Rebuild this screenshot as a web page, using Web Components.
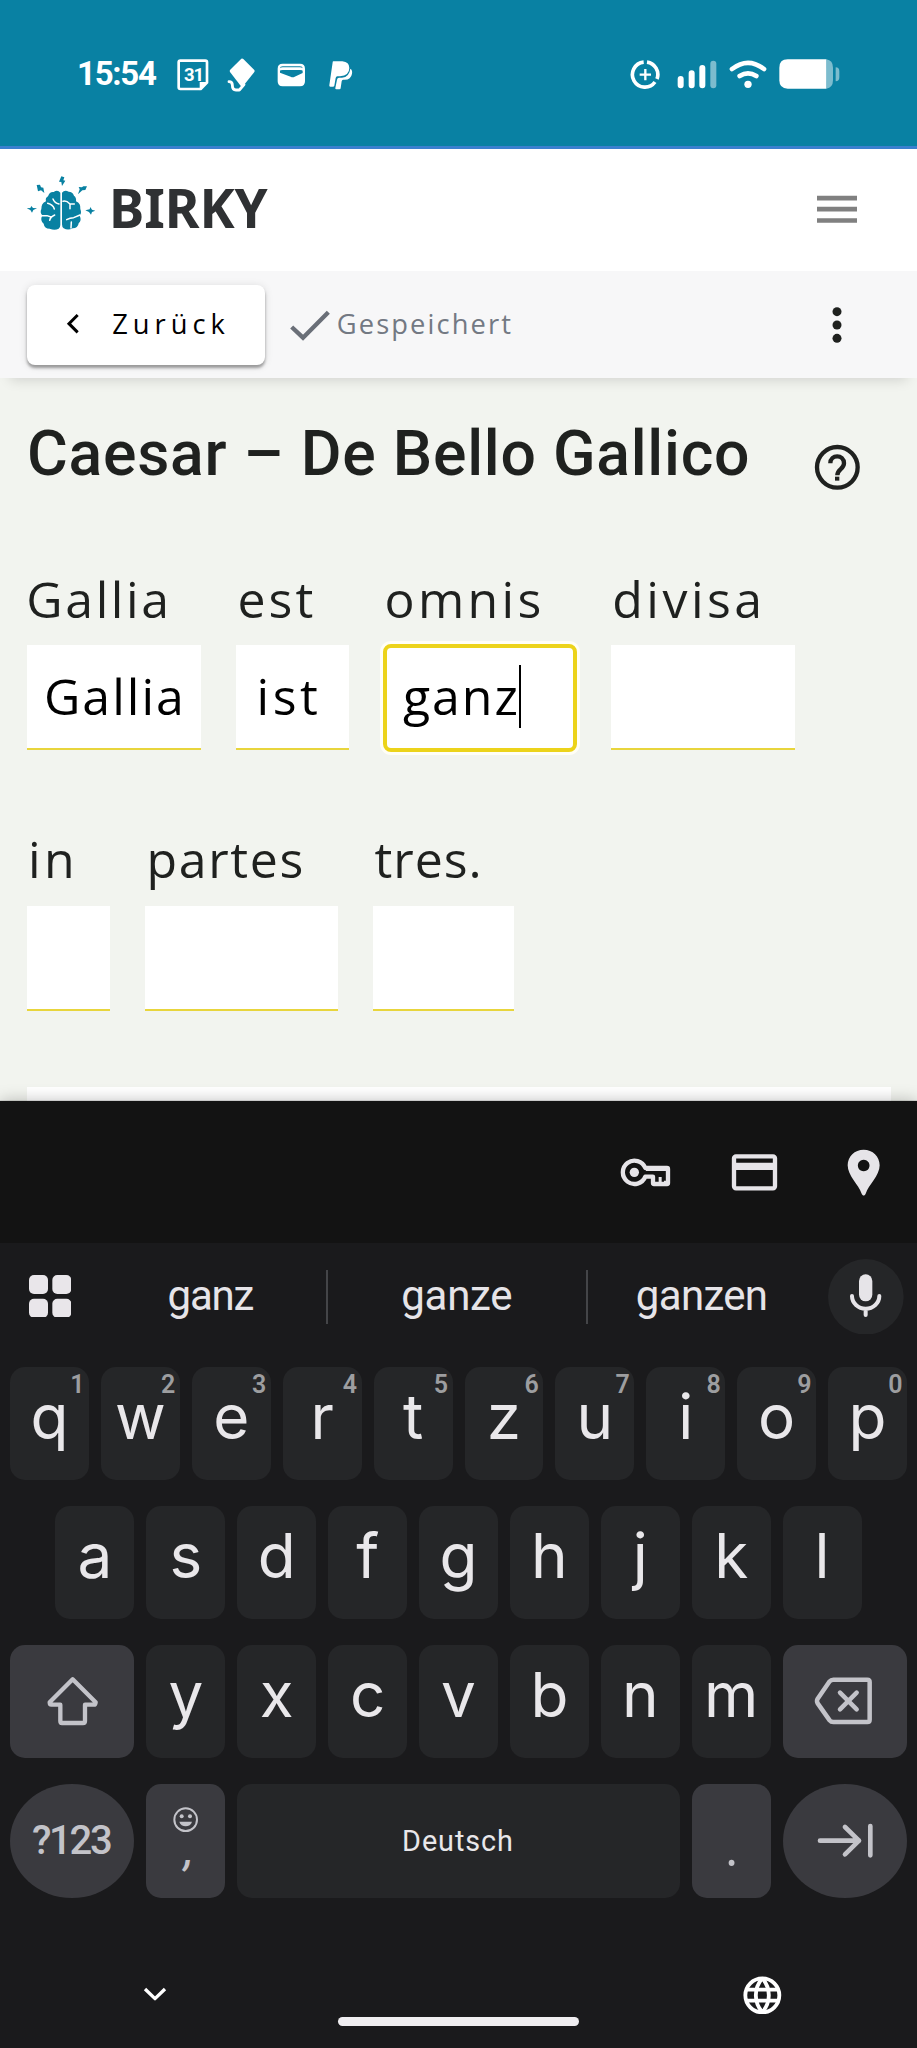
<!DOCTYPE html>
<html lang="de">
<head>
<meta charset="utf-8">
<title>Caesar – De Bello Gallico</title>
<style>
html,body{margin:0;padding:0}
body{width:917px;height:2048px;overflow:hidden;background:#f2f4ef}
</style>
</head>
<body>
<birky-app></birky-app>
<script>
/* Base: each element supplies its css and html as static strings */
class Base extends HTMLElement {
  connectedCallback() {
    if (this.shadowRoot) return;
    const t = document.createElement('template');
    t.innerHTML = `<style>${this.constructor.css}</style>${this.view ? this.view() : this.constructor.html}`;
    this.attachShadow({mode: 'open'}).appendChild(t.content.cloneNode(true));
    if (this.ready) this.ready();
  }
}

/* Text set to a given ink width (w) with its baseline (b) below the top of its box */
customElements.define('fit-text', class extends Base {
  static css = `:host{display:block;flex:none;white-space:nowrap} span{display:block}`;
  static html = `<span><slot></slot></span>`;
  ready() {
    const cs = getComputedStyle(this), c = document.createElement('canvas').getContext('2d');
    const s = this.textContent.trim(), el = this.shadowRoot.querySelector('span');
    c.font = `${cs.fontStyle} ${cs.fontWeight} ${cs.fontSize} ${cs.fontFamily}`;
    const m = c.measureText(s), w = +this.getAttribute('w'), b = +this.getAttribute('b');
    if (w) {
      const ink = m.actualBoundingBoxLeft + m.actualBoundingBoxRight;
      if (s.length > 1) el.style.letterSpacing = (w - ink) / (s.length - 1) + 'px';
      el.style.marginLeft = m.actualBoundingBoxLeft + 'px';
      this.style.width = w + 'px';
    }
    if (b) el.style.lineHeight = 2 * b - m.fontBoundingBoxAscent + m.fontBoundingBoxDescent + 'px';
    this.style.height = (b || 10) + 'px';
  }
});

/* Icon artwork, drawn on a grid of three units to the pixel: [viewBox, markup] */
const W = 'fill="none" stroke="currentColor" stroke-linecap="round" stroke-linejoin="round"';
const ICONS = {
  calendar: ['528 170 126 108', `<path ${W} stroke-width="8" d="M536 186q0-5 5-5h75q5 0 5 5v61l-19 19h-61q-5 0-5-5z"/><path fill="currentColor" d="M599 270v-25h25z"/>`],
  kite: ['654 170 144 108', `<path fill="currentColor" d="M724 175q3-2 6 1l33 33q2 3 0 6l-34 43q-3 3-6 0l-33-43q-2-3 0-6z"/><path ${W} stroke-width="8.5" d="M687 244q10 0 10 10 0 15 11 15h10l14-16"/>`],
  wallet: ['798 170 152 108', `<path fill="currentColor" fill-rule="evenodd" d="M848 190h52q15 0 15 15v38q0 15-15 15h-52q-15 0-15-15v-38q0-15 15-15zM840 204q0-6 8-6h52q8 0 8 6-3-3-8-3h-52q-5 0-8 3zM840 211q0-2 8-2h52q8 0 8 2v7l-24 11q-6 3-12 0l-32-12z"/>`],
  paypal: ['950 170 120 108', `<path fill="currentColor" d="M999 183h27q21 2 21 20 0 23-28 25h-8q-4 0-5 5l-4 23q-1 3-4 3h-8q-4 0-3-4l10-69q0-3 2-3z"/><path fill="currentColor" d="M1050 205q7 4 5 15-3 18-22 18h-5q-3 0-4 5l-3 20q0 4-4 4h-9q-4 0-3-4l5-25q1-6 6-6h9q22-2 25-27z"/>`],
  saver: ['520 170 136 108', `<path ${W} style="stroke-linecap:butt" stroke-width="11" d="M561 185.500A37.500 37.500 0 1 0 595 245M571 185.500A37.500 37.500 0 0 1 601 236"/><path ${W} stroke-width="7" style="stroke-linecap:butt" d="M566 206v34M549 223h34"/>`],
  signal: ['656 170 156 108', `<path ${W} stroke-width="18" d="M670 236v19M703 219v36M735 203v52"/><path ${W} stroke-width="18" opacity=".47" d="M768 190v65"/>`],
  wifi: ['812 170 150 108', `<path ${W} stroke-width="14" d="M824 206q48-37 96 0M847 227q25-16 50 0"/><circle cx="872" cy="252" r="11" fill="currentColor"/>`],
  battery: ['962 170 190 108', `<path fill="currentColor" d="M991 177h116v88h-116q-25 0-25-25v-38q0-25 25-25z"/><path fill="currentColor" opacity=".47" d="M1107 177q20 3 20 25v38q0 22-20 25zM1135 201q11 0 11 12v18q0 12-11 12z"/>`],
  brain: ['78 526 210 170', `<g fill="#0981a2"><path d="M181 579q-8-10-20-2-12-2-17 13-9 5-6 15-15 7-14 23-5 11 3 19-8 16 4 25 2 15 18 15 15 7 27 0 5-3 5-12zM186 579q8-10 20-3 12 0 16 12 8 6 6 17 15 7 13 23 5 12-2 20 7 14-3 23-2 15-18 15-14 7-27 0-5-3-5-12z"/>
   <path d="M184 530l9 3-3 9 6 1-10 16-2-12-7-1zM110 556l10-1 3 8 7 1 3 16-10-8-9 3zM261 560l-5 11-9 1-13 12 5-15-3-7 10 1 4-3zM80 626l11-1 3-6 5 6 12 1-11 5-4 8-5-8zM256 632l13-3 2-7 5 8 10 3-10 4-3 8-6-8z"/></g>
   <g ${W} style="stroke:#fff" stroke-width="4.500"><path d="M159 598q5 13 18 15M143 611q16 4 20 17M125 648h16l12 4M149 662q2-10 15-16M189 605q10-3 20 7l14 1M210 613v14M200 660q10-6 21-6l19-8M213 685l1-18"/></g>`],
  menu: ['1080 583 120 84', `<path stroke="#808080" stroke-width="14" d="M1080 592.500h120M1080 625.500h120M1080 659.500h120"/>`],
  back: ['200 130 40 64', `<path fill="none" stroke="#000" stroke-width="9" d="M235 136l-26 26 26 26"/>`],
  check: ['870 120 120 94', `<path fill="none" stroke="#6a6f78" stroke-width="13" d="M875 171l34 32 76-76"/>`],
  more: ['1124 108 30 112', `<g fill="#1f211f"><circle cx="1139" cy="125" r="13.500"/><circle cx="1139" cy="165" r="13.500"/><circle cx="1139" cy="205" r="13.500"/></g>`],
  help: ['1070 523 140 140', `<circle cx="1140" cy="593" r="61" fill="none" stroke="#1f211f" stroke-width="13"/><path fill="none" stroke="#1f211f" stroke-width="13" d="M1119 581c0-28 41-28 41 0 0 18-20 17-20 36"/><path fill="#1f211f" d="M1133 621h13v12h-13z"/>`],
  key: ['495 237 153 142', `<path ${W} stroke-width="13" d="M571 294h65q3 0 3 3v42q0 3-3 3h-39q-3 0-3-3v-19h-23a35 35 0 1 1 0-26z"/><circle cx="538" cy="307" r="14" fill="currentColor"/><path fill="currentColor" d="M611 321h9v20h-9zM627 332h8v8h-8zM573 298h60v5h-60z"/>`],
  card: ['825 237 141 142', `<rect x="834" y="259" width="123" height="96" rx="6" ${W} stroke-width="13"/><path fill="currentColor" d="M834 278h123v22h-123z"/>`],
  pin: ['1168 237 100 142', `<path fill="currentColor" fill-rule="evenodd" d="M1218 239c27 0 48 20 48 47 0 31-33 58-42 85-3 7-9 7-12 0-9-27-42-54-42-85 0-27 21-47 48-47zm0 30a17.500 17.500 0 1 0 .1 0z"/>`],
  apps: ['87 164 127 127', `<g fill="#e9e6ea"><rect x="87" y="164" width="57" height="57" rx="15"/><rect x="157" y="164" width="57" height="57" rx="15"/><rect x="87" y="235" width="57" height="57" rx="15"/><rect x="157" y="235" width="57" height="57" rx="15"/></g>`],
  mic: ['1113 566 227 227', `<circle cx="1226.500" cy="679.500" r="113.500" fill="#252628"/><rect x="1206" y="612" width="40" height="81" rx="20" fill="#e6e4e8"/><path fill="none" stroke="#e6e4e8" stroke-width="12" stroke-linecap="round" d="M1185 677a41 38 0 0 0 82 0M1226 716v18"/>`],
  shift: ['140 168 154 150', `<path ${W} stroke-width="13" d="M217 178l69 69q-1 7-5 7h-27v49q0 6-6 6h-63q-5 0-5-6v-49h-27q-5 0-5-7z"/>`],
  del: ['1070 982 176 144', `<path ${W} stroke-width="13.500" d="M1128 990h102q7 0 7 7v113q0 7-7 7h-102q-7 0-11-5l-36-51q-4-7 0-14l36-52q4-5 11-5z"/><path ${W} stroke-width="13.500" d="M1148 1029l50 50M1198 1029l-50 50"/>`],
  smile: ['517 558 76 76', `<circle cx="555" cy="596" r="34" ${W} stroke-width="6"/><circle cx="543" cy="586" r="6" fill="currentColor"/><circle cx="568" cy="586" r="6" fill="currentColor"/><path fill="currentColor" d="M536 602h38c-4 18-34 18-38 0z"/>`],
  tab: ['1080 193 170 106', `<path ${W} stroke-width="14" d="M1089 246h117M1164 205l42 41-42 41M1240 202v88"/>`],
  down: ['430 1102 72 44', `<path ${W} style="stroke-linecap:butt" stroke-width="10" d="M436 1108l30 29 30-29"/>`],
  globe: ['857 647 116 116', `<g fill="none" stroke="#fff" stroke-width="11.500"><circle cx="915" cy="705" r="51"/><path d="M868 688h94M868 721h94"/><path d="M915 654c-26 30-26 72 0 102M915 654c26 30 26 72 0 102"/></g>`]
};
customElements.define('ui-icon', class extends Base {
  static css = `:host{display:block;flex:none} svg{display:block}`;
  view() {
    const [vb, art] = ICONS[this.getAttribute('name')], [, , w, h] = vb.split(' ');
    return `<svg viewBox="${vb}" width="${w / 3}" height="${h / 3}">${art}</svg>`;
  }
});

customElements.define('status-bar', class extends Base {
  static css = `:host{display:flex;box-sizing:border-box;height:149px;padding:0 76px 0 79px;align-items:flex-start;background:#0981a3;border-bottom:3px solid #3a80cf;color:#fff;font:700 33px Roboto,sans-serif}
   .g{display:flex;padding-top:56.670px} .r{margin-left:auto;width:210.670px}
   .time{margin-right:19px} .cal{position:relative} .cal fit-text{position:absolute;left:8px;top:0;font-size:18.500px}`;
  static html = `<div class="g"><fit-text class="time" w="78" b="28">15:54</fit-text>
   <div class="cal"><ui-icon name="calendar"></ui-icon><fit-text w="17.500" b="24.500">31</fit-text></div>
   <ui-icon name="kite"></ui-icon><ui-icon name="wallet"></ui-icon><ui-icon name="paypal"></ui-icon></div>
   <div class="g r"><ui-icon name="saver"></ui-icon><ui-icon name="signal"></ui-icon><ui-icon name="wifi"></ui-icon><ui-icon name="battery"></ui-icon></div>`;
});

customElements.define('site-header', class extends Base {
  static css = `:host{display:flex;height:122px;background:#fff;padding:0 60px 0 26px;justify-content:space-between}
   .brand{display:flex;padding-top:26.330px;gap:17px;color:#2f3133;font:700 53px "Noto Sans",sans-serif} .m{margin-top:45.800px}`;
  static html = `<div class="brand"><ui-icon name="brain"></ui-icon><fit-text w="155.500" b="53.200">BIRKY</fit-text></div><ui-icon class="m" name="menu"></ui-icon>`;
});

customElements.define('tool-bar', class extends Base {
  static css = `:host{display:flex;height:107px;box-sizing:border-box;padding:13.500px 75px 0 27px;background:#f7f7f8;box-shadow:0 12px 12px -10px rgba(0,0,0,.14);position:relative;font:400 27.300px "Open Sans",sans-serif}
   .btn{display:flex;flex:none;box-sizing:border-box;width:238px;height:80px;padding-left:39.300px;border-radius:8px;background:#fff;box-shadow:0 3px 3px rgba(0,0,0,.34),0 1px 8px rgba(0,0,0,.12)}
   .btn ui-icon{margin-top:28.800px}.btn fit-text{margin-left:33.500px;color:#000}
   .saved{display:flex;margin-left:25.300px;color:#737983} .saved ui-icon{margin-top:25.500px} .saved fit-text{margin-left:7.500px}
   .k{margin:21.500px 0 0 auto}`;
  static html = `<div class="btn"><ui-icon name="back"></ui-icon><fit-text w="112.500" b="49.300">Zurück</fit-text></div>
   <div class="saved"><ui-icon name="check"></ui-icon><fit-text w="173.500" b="49.300">Gespeichert</fit-text></div><ui-icon class="k" name="more"></ui-icon>`;
});

/* One source word with the field for its translation */
customElements.define('word-field', class extends Base {
  static css = `:host{display:block;flex:none;font:400 50px "Open Sans",sans-serif;color:#1f211f}
   .l{height:67.500px;padding-left:var(--lp)}
   .f{box-sizing:border-box;height:105px;background:#fff;border-bottom:2px solid #e8d53c;color:#000;padding-left:var(--ip);position:relative;display:flex}
   :host([active]) .f{height:108px;margin:-1.500px -1px 0;border:4px solid #ecd31a;border-radius:8px;box-shadow:0 0 0 3px #fffef6}
   .c{width:2px;height:63px;margin:17.500px 0 0 2px;background:#000}`;
  view() {
    const a = n => this.getAttribute(n), act = this.hasAttribute('active');
    this.style.width = a('width') + 'px';
    return `<div class="l" style="--lp:${a('lp')}px"><fit-text w="${a('lw')}" b="40.500">${a('label')}</fit-text></div>
     <div class="f" style="--ip:${a('ip') || 0}px">${a('value') ? `<fit-text w="${a('vw')}" b="${act ? 67.5 : 70.5}">${a('value')}</fit-text>` : ''}${act ? '<i class="c"></i>' : ''}</div>`;
  }
});

customElements.define('exercise-view', class extends Base {
  static css = `:host{display:block;height:723px;box-sizing:border-box;padding:0 26px 0 27px;background:#f2f4ef}
   .h{display:flex;justify-content:space-between;height:199.500px;padding-right:30.700px;padding-left:3px;font:500 62.500px Roboto,sans-serif;color:#1f211f}
   .h ui-icon{margin-top:66.300px}
   .row{display:flex;gap:35px;height:260.500px} .card{height:14px;background:#fff;margin-top:-11.500px}`;
  static html = `<div class="h"><fit-text w="718" b="97.700">Caesar – De Bello Gallico</fit-text><ui-icon name="help"></ui-icon></div>
   <div class="row"><word-field width="174" label="Gallia" lp="2.300" lw="136" value="Gallia" ip="20" vw="133"></word-field>
   <word-field width="112.500" label="est" lp="3.500" lw="73" value="ist" ip="23.500" vw="57.500"></word-field>
   <word-field active width="192.500" label="omnis" lp="3" lw="153" value="ganz" ip="16.500" vw="113.500"></word-field>
   <word-field width="184" label="divisa" lp="3.300" lw="144"></word-field></div>
   <div class="row"><word-field width="83" label="in" lp="4" lw="40"></word-field>
   <word-field width="193" label="partes" lp="5.500" lw="151"></word-field>
   <word-field width="140.500" label="tres." lp="1.500" lw="104"></word-field></div><div class="card"></div>`;
});

customElements.define('autofill-bar', class extends Base {
  static css = `:host{display:flex;height:142px;box-sizing:border-box;padding:48px 36.700px 0 0;justify-content:flex-end;gap:60px;color:#e6e4e8;background:#131313}.p{margin-left:8.500px}`;
  static html = `<ui-icon name="key"></ui-icon><ui-icon name="card"></ui-icon><ui-icon class="p" name="pin"></ui-icon>`;
});

customElements.define('suggestion-strip', class extends Base {
  static css = `:host{display:flex;height:124px;box-sizing:border-box;padding-left:29px;color:#e6e4e8;font:400 42px Roboto,sans-serif}
   .d{flex:none;width:2px;height:54px;margin-top:26.500px;background:#444548} .a{margin-top:31.500px}.m{margin:15.500px 0 0 62.500px}`;
  static html = `<ui-icon class="a" name="apps"></ui-icon><fit-text style="margin-left:97.200px" w="85" b="67.500">ganz</fit-text><i class="d" style="margin-left:72.800px"></i>
   <fit-text style="margin-left:74px" w="109" b="67.500">ganze</fit-text><i class="d" style="margin-left:75px"></i>
   <fit-text style="margin-left:48.500px" w="129" b="67.500">ganzen</fit-text><ui-icon class="m" name="mic"></ui-icon>`;
});

customElements.define('key-cap', class extends Base {
  static css = `:host{display:block;flex:none;box-sizing:border-box;width:78.900px;height:112.500px;border-radius:15px;background:#252628;color:#e9e7ea;font:400 62px/100px Inter,sans-serif;text-align:center;position:relative}
   :host([mod]){background:#3a3a3f;color:#c3c3c9}
   :host([wide]){width:124.200px;display:flex;align-items:center;justify-content:center}
   :host([round]){border-radius:62px/57px}
   :host([space]){flex:1}
   :host([tall]){height:114px}
   sup{position:absolute;right:4.500px;top:5px;font:600 25px/26px Roboto,sans-serif;color:#9d9ea0}`;
  view() { const h = this.getAttribute('hint'); return `<slot></slot>${h ? `<sup>${h}</sup>` : ''}`; }
});

customElements.define('key-board', class extends Base {
  static css = `:host{display:block} .row{display:flex;gap:12px;justify-content:center;padding:0 10px;height:139px}
   .sym{font:500 40px Roboto,sans-serif;align-self:flex-start;margin:41px 1px 0 0}
   .sm{margin:22.500px auto 0;width:25.330px}
   .comma{font:italic 500 42px Roboto,sans-serif;margin:0 auto}
   .dot{font:400 50px "Open Sans",sans-serif;margin:0 auto}
   .lang{font:400 28.800px Roboto,sans-serif;margin-left:167px}
   .del{margin-right:3px} .tab{margin-left:1px}`;
  view() {
    const keys = (s, hints) => [...s].map((c, i) => `<key-cap${hints ? ` hint="${(i + 1) % 10}"` : ''}>${c}</key-cap>`).join('');
    return `<div class="row">${keys('qwertzuiop', true)}</div><div class="row">${keys('asdfghjkl')}</div>
    <div class="row"><key-cap mod wide><ui-icon name="shift"></ui-icon></key-cap>${keys('yxcvbnm')}<key-cap mod wide><ui-icon class="del" name="del"></ui-icon></key-cap></div>
    <div class="row"><key-cap mod wide round tall><fit-text class="sym" w="78" b="29.700">?123</fit-text></key-cap>
    <key-cap mod tall><ui-icon class="sm" name="smile"></ui-icon><fit-text class="comma" w="9" b="33">,</fit-text></key-cap>
    <key-cap space tall><fit-text class="lang" w="107" b="67">Deutsch</fit-text></key-cap>
    <key-cap mod tall><fit-text class="dot" w="6.500" b="82">.</fit-text></key-cap>
    <key-cap mod wide round tall><ui-icon class="tab" name="tab"></ui-icon></key-cap></div>`;
  }
});

customElements.define('nav-bar', class extends Base {
  static css = `:host{display:flex;color:#fff;padding:52px 135px 0 143.300px} .d{margin-top:12.300px}.p{width:241px;height:9px;border-radius:5px;background:#efedf0;margin:42px 0 0 170.700px}.g{margin:0 0 0 auto;padding-top:.700px}`;
  static html = `<ui-icon class="d" name="down"></ui-icon><div class="p"></div><ui-icon class="g" name="globe"></ui-icon>`;
});

customElements.define('birky-app', class extends Base {
  static css = `:host{display:block;width:917px;height:2048px;overflow:hidden}
   .kb{height:947px;background:#1a1a1c;position:relative;box-shadow:0 0 1px rgba(0,0,0,.6),0 0 15px rgba(0,0,0,.26)}`;
  static html = `<status-bar></status-bar><site-header></site-header><tool-bar></tool-bar><exercise-view></exercise-view>
   <div class="kb"><autofill-bar></autofill-bar><suggestion-strip></suggestion-strip><key-board></key-board><nav-bar></nav-bar></div>`;
});
</script>
</body>
</html>
